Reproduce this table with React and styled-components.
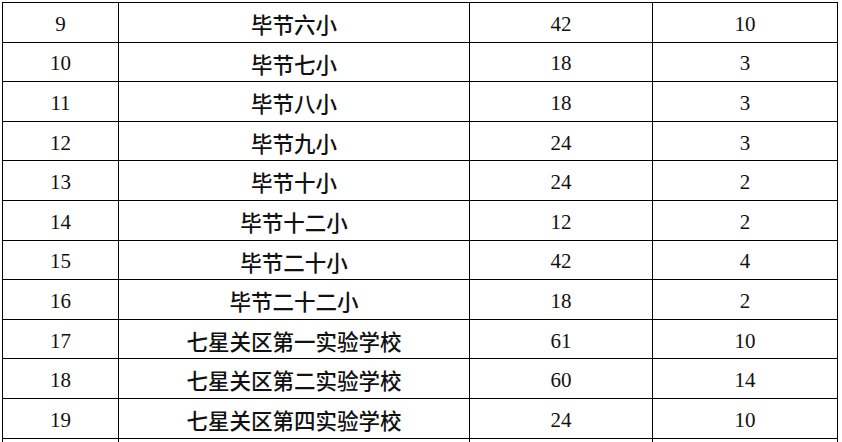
import React from "react";
import styled, { createGlobalStyle } from "styled-components";

const Global = createGlobalStyle`
  html, body { margin: 0; padding: 0; background: #fff; overflow: hidden; }
  body { width: 842px; height: 442px; }
`;

const Sheet = styled.div`
  padding: 2px 0 0 2px;
  width: 842px;
  height: 442px;
  box-sizing: border-box;
  overflow: hidden;
`;

const Grid = styled.div`
  display: grid;
  grid-template-columns: 116px 351px 183px 185px;
  grid-auto-rows: 39.6px;
  border-left: 1px solid #000;
  border-top: 1px solid #000;
  width: max-content;
  color: #111;
`;

const Cell = styled.div`
  display: flex;
  align-items: center;
  justify-content: center;
  box-sizing: border-box;
  border-right: 1px solid #000;
  border-bottom: 1px solid #000;
  padding-top: 4px;
  line-height: 1;
  white-space: nowrap;
  font-family: "Liberation Serif", "Times New Roman", serif;
  font-size: 21px;
`;

const NameCell = styled(Cell)`
  padding-top: 3px;
  font-family: "Noto Sans CJK SC", "Noto Sans", sans-serif;
  font-size: 21.5px;
  font-weight: 500;
`;

const rows = [
  [9, "毕节六小", 42, 10],
  [10, "毕节七小", 18, 3],
  [11, "毕节八小", 18, 3],
  [12, "毕节九小", 24, 3],
  [13, "毕节十小", 24, 2],
  [14, "毕节十二小", 12, 2],
  [15, "毕节二十小", 42, 4],
  [16, "毕节二十二小", 18, 2],
  [17, "七星关区第一实验学校", 61, 10],
  [18, "七星关区第二实验学校", 60, 14],
  [19, "七星关区第四实验学校", 24, 10],
  ["", "", "", ""],
];

export default function App() {
  return (
    <>
      <Global />
      <Sheet>
        <Grid>
          {rows.map((r, i) => (
            <React.Fragment key={i}>
              <Cell>{r[0]}</Cell>
              <NameCell>{r[1]}</NameCell>
              <Cell>{r[2]}</Cell>
              <Cell>{r[3]}</Cell>
            </React.Fragment>
          ))}
        </Grid>
      </Sheet>
    </>
  );
}
